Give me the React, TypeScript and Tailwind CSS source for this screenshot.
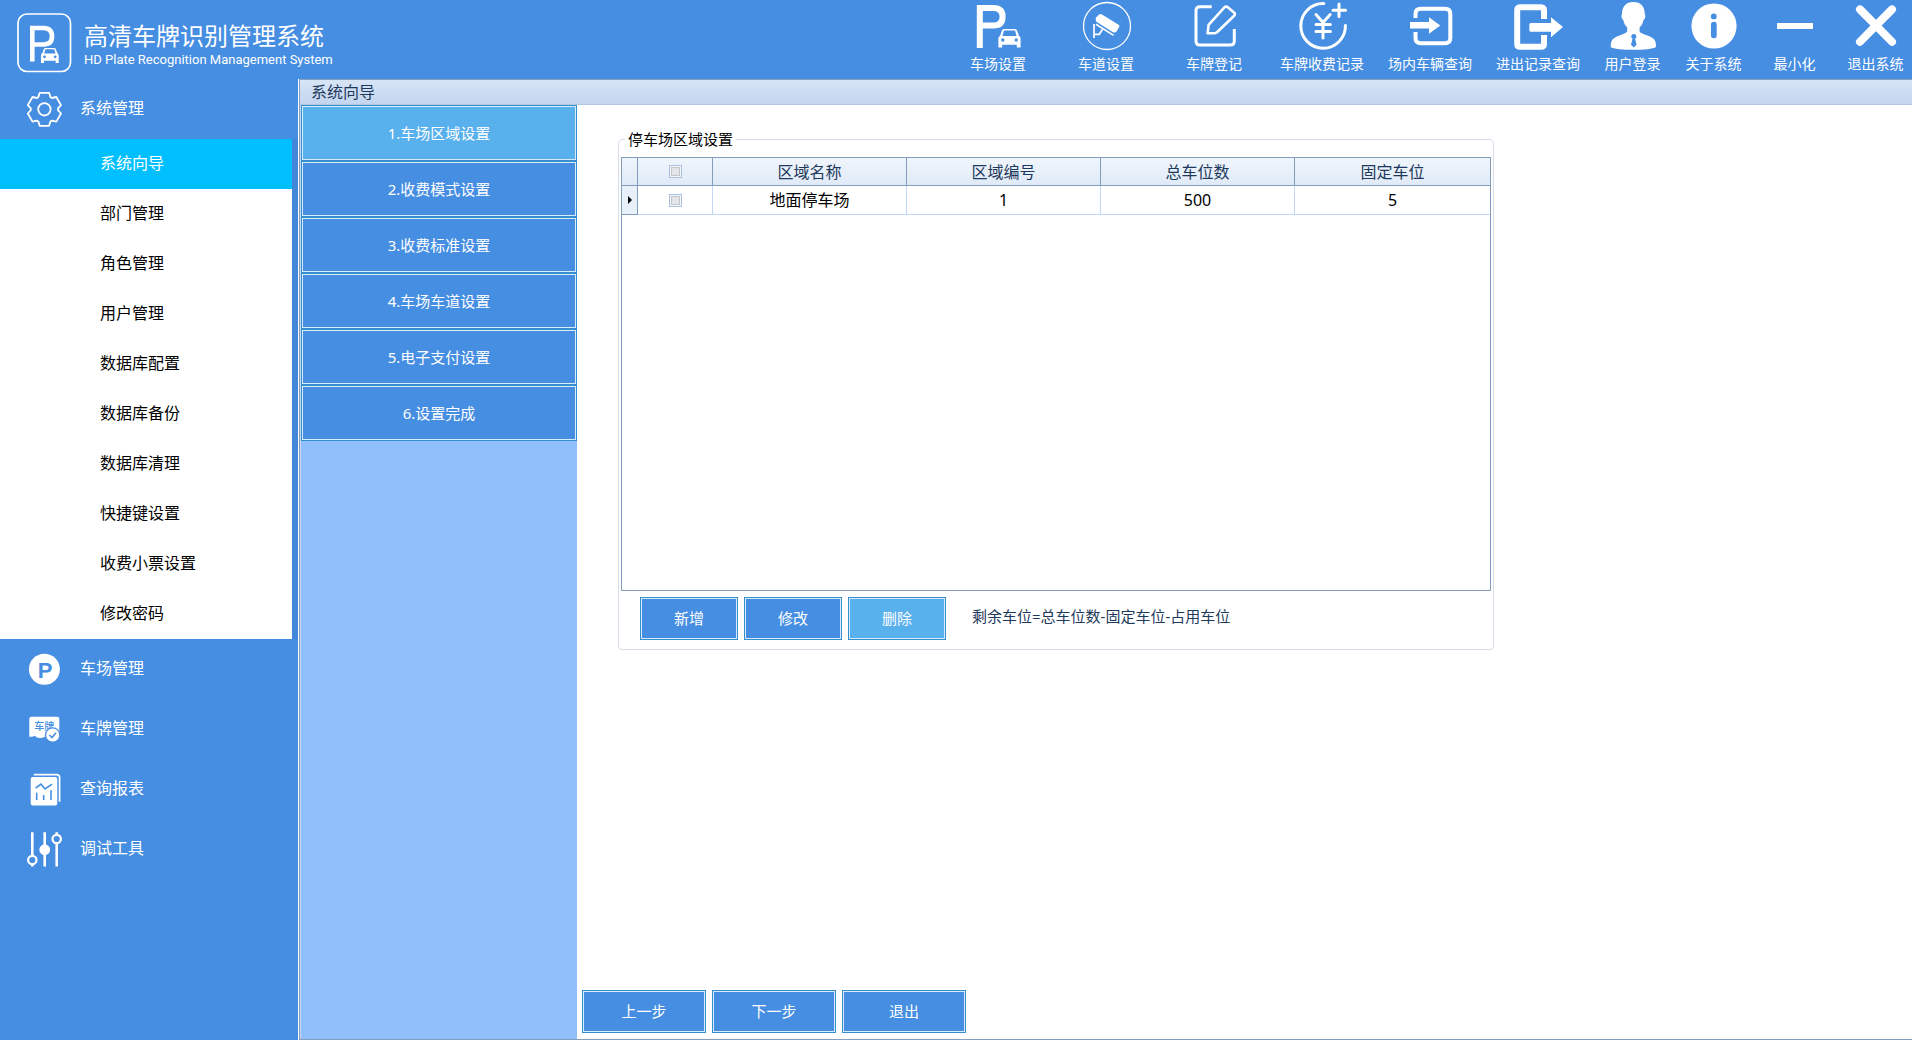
import React, { useState } from "react";

const white = "#ffffff";
const blue = "#468ee2";

/* ---------- Toolbar icons (52 x 52) ---------- */

function ToolSvg({ children }: { children: React.ReactNode }) {
  return (
    <svg width="52" height="52" viewBox="0 0 52 52" fill="none" stroke="none" aria-hidden="true">
      {children}
    </svg>
  );
}

function CarShape({ x, y, scale = 1, hole = blue }: { x: number; y: number; scale?: number; hole?: string }) {
  return (
    <g transform={`translate(${x} ${y}) scale(${scale})`}>
      <path
        fill={white}
        fillRule="evenodd"
        d="M6 0H16.6Q18.4 0 19 1.8L20.6 6.4Q22.4 7.6 22.4 9.6V18.6H18.6V15.8H4V18.6H.2V9.6Q.2 7.6 2 6.4L3.6 1.8Q4.2 0 6 0ZM5.8 1.6L4.2 7H18.4L16.8 1.6Z"
      />
      <circle cx="4.6" cy="11" r="1.7" fill={hole} />
      <circle cx="18" cy="11" r="1.7" fill={hole} />
    </g>
  );
}

function ParkingIcon() {
  return (
    <ToolSvg>
      <path d="M7.8 48V8H21.500Q30.600 8 30.600 16.700Q30.600 25.500 21.500 25.500H7.800" stroke={white} strokeWidth="6" />
      <CarShape x={26.2} y={29} />
    </ToolSvg>
  );
}

function CameraIcon() {
  return (
    <ToolSvg>
      <circle cx="27" cy="26" r="23.5" stroke={white} strokeWidth="1.3" />
      <path d="M16 17.4L19.8 14Q20.6 13.8 22 14.6L39 25Q39.8 25.6 39.4 26.6L36.6 31.6Q35 33.2 33 32.2L16.4 21.8Q15 20.6 16 17.4Z" fill={white} />
      <path d="M16 24.2L33.6 35.4" stroke={white} strokeWidth="1.7" />
      <path d="M14 24V38M14 34.3H19.2L22.6 29.2" stroke={white} strokeWidth="1.7" />
    </ToolSvg>
  );
}

function EditIcon() {
  return (
    <ToolSvg>
      <path
        d="M23.7 6.7H12Q8 6.7 8 10.7V41Q8 45 12 45H42.3Q46.3 45 46.3 41V29"
        stroke={white}
        strokeWidth="3"
      />
      <path
        d="M19.6 33.2L20.6 24.8L36.4 7.4Q38 5.8 39.8 7.2L46 12.4Q47.6 14 46.2 15.8L29 32.2Q28 33.2 26.6 33.2Z"
        stroke={white}
        strokeWidth="2.6"
        strokeLinejoin="round"
      />
    </ToolSvg>
  );
}

function FeeIcon() {
  return (
    <ToolSvg>
      <g stroke={white} strokeWidth="3" strokeLinecap="round">
        <path d="M27.8 3.6A22.3 22.3 0 1 0 49.4 25.4" />
        <path d="M43 4V16.4M37 10.2H49.6" />
        <path d="M20 14.6L27 22.4L34.2 14.6M27 22.4V38M20 24.4H34.4M20 31.4H34.4" />
      </g>
    </ToolSvg>
  );
}

function EnterIcon() {
  return (
    <ToolSvg>
      <path
        d="M11.5 18V14Q11.5 8.7 16.8 8.7H41Q46.3 8.7 46.3 14V38Q46.3 43.3 41 43.3H16.8Q11.5 43.3 11.5 38V32"
        stroke={white}
        strokeWidth="4"
      />
      <path d="M6 22H25V17.3L36.3 25.4L25 33.7V28.5H6Z" fill={white} />
    </ToolSvg>
  );
}

function LeaveIcon() {
  return (
    <ToolSvg>
      <path
        d="M32 19V10Q32 7.2 29 7.2H8Q5.2 7.2 5.2 10V44Q5.2 46.8 8 46.8H29Q32 46.8 32 44V35"
        stroke={white}
        strokeWidth="6"
      />
      <path d="M18.6 23H39V17.3L51 27L39 37.3V31.7H18.6Q17.3 31.7 17.3 30V24.6Q17.3 23 18.6 23Z" fill={white} />
    </ToolSvg>
  );
}

function UserIcon() {
  return (
    <ToolSvg>
      <path
        fill={white}
        d="M26.4 2C33.6 2 38 6.6 37.8 14.4C38.8 15 38.4 18.6 36.6 19.8C35.8 23.6 34.4 25.8 32.6 27.6V31.4C33.6 34.6 47 35.4 48.4 41.6C49 44.4 49.2 46.4 48.8 47.2C44 50.6 8.6 50.6 3.8 47.2C3.6 46 3.8 44 4.4 41.6C6 35.4 19 34.6 20.2 31.4V27.6C18.4 25.8 17 23.6 16.2 19.8C14.4 18.6 14 15 15 14.4C14.8 6.6 19.2 2 26.4 2Z"
      />
      <circle cx="26.8" cy="36.4" r="2.5" fill={blue} />
      <path d="M25.6 38.4H28L29.6 44.8L26.8 47.4L24 44.8Z" fill={blue} />
    </ToolSvg>
  );
}

function InfoIcon() {
  return (
    <ToolSvg>
      <circle cx="26" cy="26" r="22.6" fill={white} />
      <circle cx="25.8" cy="16.4" r="2.9" fill={blue} />
      <rect x="23" y="21.8" width="5.7" height="16.4" rx="2.6" fill={blue} />
    </ToolSvg>
  );
}

function MinimizeIcon() {
  return (
    <ToolSvg>
      <rect x="8" y="23" width="36" height="6" fill={white} />
    </ToolSvg>
  );
}

function CloseIcon() {
  return (
    <ToolSvg>
      <path d="M10 9.4L42 41.8M42 9.4L10 41.8" stroke={white} strokeWidth="8" strokeLinecap="round" />
    </ToolSvg>
  );
}

/* ---------- Sidebar icons (36 x 36) ---------- */

function SideSvg({ children }: { children: React.ReactNode }) {
  return (
    <svg width="36" height="36" viewBox="0 0 36 36" fill="none" aria-hidden="true">
      {children}
    </svg>
  );
}

function GearIcon() {
  return (
    <SideSvg>
      <g transform="translate(18.4 18.3)" stroke={white} strokeWidth="1.8" strokeLinejoin="round">
        <path d="M-6-12.2L-4.7-16.5H4.7L6-12.2L7.6-11.3L11.9-12.3L16.6-4.2L13.6-.9V.9L16.6 4.2L11.9 12.3L7.6 11.3L6 12.2L4.7 16.5H-4.7L-6 12.2L-7.6 11.3L-11.9 12.3L-16.6 4.2L-13.6 .9V-.9L-16.6-4.2L-11.9-12.3L-7.6-11.3Z" />
        <circle r="6.2" />
      </g>
    </SideSvg>
  );
}

function LotIcon() {
  return (
    <SideSvg>
      <circle cx="18.4" cy="18.3" r="15.5" fill={white} />
      <text x="19" y="26.5" fontSize="22" fontWeight="700" textAnchor="middle" fill={blue} fontFamily="Liberation Sans, sans-serif">
        P
      </text>
    </SideSvg>
  );
}

function PlateIcon() {
  return (
    <SideSvg>
      <path d="M5.3 5.7H31.3Q33.3 5.7 33.3 7.7V25.7H19Q16.6 27 13.4 27Q10.6 27 9.4 25.2Q7.6 24.4 6.6 25.7H3.3V7.7Q3.3 5.7 5.3 5.7Z" fill={white} />
      <text x="18.2" y="19" fontSize="10" fontWeight="500" textAnchor="middle" fill={blue} fontFamily="Noto Sans CJK SC, sans-serif">
        车牌
      </text>
      <circle cx="26.7" cy="24" r="7.2" fill={white} stroke={blue} strokeWidth="1.3" />
      <path d="M23.4 24L26 26.5L30 21.8" stroke={blue} strokeWidth="1.6" />
    </SideSvg>
  );
}

function ReportIcon() {
  return (
    <SideSvg>
      <path d="M7.8 3.6H30.6Q33.6 3.6 33.6 6.6V30.8" stroke={white} strokeWidth="1.7" />
      <rect x="4.7" y="5.9" width="26.6" height="28.7" rx="2" fill={white} />
      <path d="M9.6 17L15 13.2L19 18L26 13.2M10.7 21.7V29M17.7 24V29M25 19.3V29" stroke={blue} strokeWidth="1.6" />
    </SideSvg>
  );
}

function ToolsIcon() {
  return (
    <SideSvg>
      <g stroke={white} strokeWidth="2.6">
        <path d="M6.3 1.3V24.8M6.3 33.4V35.6M18.7 1.3V35.6M30.7 1.3V3.6M30.7 12.4V35.6" />
        <circle cx="6.3" cy="29" r="4.2" strokeWidth="2.2" />
        <circle cx="30.7" cy="8" r="4.2" strokeWidth="2.2" />
      </g>
      <circle cx="18.7" cy="18.7" r="5.4" fill={white} />
    </SideSvg>
  );
}

/* ---------- Data ---------- */

const tools = [
  { label: "车场设置", Icon: ParkingIcon },
  { label: "车道设置", Icon: CameraIcon },
  { label: "车牌登记", Icon: EditIcon },
  { label: "车牌收费记录", Icon: FeeIcon },
  { label: "场内车辆查询", Icon: EnterIcon },
  { label: "进出记录查询", Icon: LeaveIcon },
];

const windowTools = [
  { label: "用户登录", Icon: UserIcon },
  { label: "关于系统", Icon: InfoIcon },
  { label: "最小化", Icon: MinimizeIcon },
  { label: "退出系统", Icon: CloseIcon },
];

const systemMenu = [
  "系统向导",
  "部门管理",
  "角色管理",
  "用户管理",
  "数据库配置",
  "数据库备份",
  "数据库清理",
  "快捷键设置",
  "收费小票设置",
  "修改密码",
];

const otherGroups = [
  { label: "车场管理", Icon: LotIcon },
  { label: "车牌管理", Icon: PlateIcon },
  { label: "查询报表", Icon: ReportIcon },
  { label: "调试工具", Icon: ToolsIcon },
];

const steps = [
  "1.车场区域设置",
  "2.收费模式设置",
  "3.收费标准设置",
  "4.车场车道设置",
  "5.电子支付设置",
  "6.设置完成",
];

const areas = [{ name: "地面停车场", code: "1", total: "500", fixed: "5" }];

/* ---------- Parts ---------- */

function ToolButton({ label, Icon, narrow }: { label: string; Icon: () => React.ReactElement; narrow?: boolean }) {
  return (
    <button className={`flex shrink-0 flex-col items-center gap-1 text-sm leading-4 whitespace-nowrap text-white ${narrow ? "w-[81px]" : "w-[108px]"}`}>
      <Icon />
      <span>{label}</span>
    </button>
  );
}

function GroupButton({ label, Icon }: { label: string; Icon: () => React.ReactElement }) {
  return (
    <button className="flex h-[60px] w-full items-center gap-[18px] pl-[26px] text-base text-white">
      <Icon />
      <span className="pb-0.5">{label}</span>
    </button>
  );
}

function FrameButton({ label, wide, light }: { label: string; wide?: boolean; light?: boolean }) {
  return (
    <button
      className={`h-[43px] border border-[#348fcc] text-[15px] text-white shadow-[inset_0_0_0_1px_#d8ebfb] ${
        wide ? "w-[124px]" : "w-[98px]"
      } ${light ? "bg-[#58b0ed]" : "bg-[#468ee2]"}`}
    >
      {label}
    </button>
  );
}

function TickBox({ label }: { label: string }) {
  return (
    <input
      type="checkbox"
      aria-label={label}
      className="mx-auto block h-[13px] w-[13px] appearance-none border border-[#a9c1e0] bg-[#e4e5e8] shadow-[inset_0_0_0_1px_#f4f6f8,inset_0_0_0_2px_#c3c7cd]"
    />
  );
}

const headCell = "border-b border-r border-[#849dbd] p-0 font-normal";
const bodyCell = "border-b border-r border-[#c1d7f3] p-0";

export default function App() {
  const [menu, setMenu] = useState(0);
  const [step, setStep] = useState(0);

  return (
    <div className="flex min-h-screen flex-col bg-[#468ee2] font-['Noto_Sans','Noto_Sans_CJK_SC',sans-serif]">
      {/* Top bar */}
      <header className="flex h-[79px] justify-between overflow-hidden">
        <div className="flex items-center gap-3 pt-1.5 pl-4 text-white">
          <svg width="56" height="62" viewBox="0 0 56 62" fill="none" aria-hidden="true">
            <rect x="2" y="2" width="52.5" height="57.5" rx="9" stroke={white} strokeWidth="1.7" />
            <path d="M16.3 49.5V16H27.5Q36 16 36 24.3Q36 32.5 27.5 32.5H16.3" stroke={white} strokeWidth="4.6" />
            <CarShape x={24.8} y={36} scale={0.8} />
          </svg>
          <div className="pt-1.5 whitespace-nowrap">
            <h1 className="text-2xl leading-7">高清车牌识别管理系统</h1>
            <p className="font-['Roboto',sans-serif] text-[13px] leading-5">HD Plate Recognition Management System</p>
          </div>
        </div>
        <nav className="-mr-1 flex">
          {tools.map((t) => (
            <ToolButton key={t.label} label={t.label} Icon={t.Icon} />
          ))}
          {windowTools.map((t) => (
            <ToolButton key={t.label} label={t.label} Icon={t.Icon} narrow />
          ))}
        </nav>
      </header>

      <div className="flex flex-1">
        {/* Side menu */}
        <aside className="w-[298px] shrink-0">
          <GroupButton label="系统管理" Icon={GearIcon} />
          <div className="bg-[#4388d8] pr-1.5">
            <ul className="bg-white">
              {systemMenu.map((item, i) => (
                <li key={item}>
                  <button
                    onClick={() => setMenu(i)}
                    className={`block h-[50px] w-full pb-0.5 pl-[100px] text-left text-base ${
                      menu === i ? "bg-[#00bfff] text-white" : "text-black"
                    }`}
                  >
                    {item}
                  </button>
                </li>
              ))}
            </ul>
          </div>
          {otherGroups.map((g) => (
            <GroupButton key={g.label} label={g.label} Icon={g.Icon} />
          ))}
        </aside>

        {/* Wizard window */}
        <main className="flex flex-1 border-l border-white">
          <section className="flex flex-1 flex-col border-y border-l border-[#849dbd] bg-white">
            <h2 className="h-[25px] border-b border-[#b0c6e2] bg-linear-to-b from-[#d7e5f6] to-[#c3d6ef] pl-[11px] text-base leading-6 text-[#1e395b]">
              系统向导
            </h2>
            <div className="flex flex-1 border-l border-[#c4d8f2]">
              <nav className="w-[276px] shrink-0 bg-[#8fc0fc]">
                {steps.map((s, i) => (
                  <button
                    key={s}
                    onClick={() => setStep(i)}
                    className={`block h-14 w-full border border-[#348fcc] text-[15px] text-white shadow-[inset_0_0_0_1px_#d8ebfb] ${
                      step === i ? "bg-[#58b0ed]" : "bg-[#468ee2]"
                    }`}
                  >
                    {s}
                  </button>
                ))}
              </nav>

              <div className="flex flex-1 flex-col justify-between">
                <div className="px-[41px] pt-[23px]">
                  <fieldset className="w-full max-w-[876px] rounded border border-[#d5dde8] px-0.5 pb-[9px]">
                    <legend className="ml-1 px-[3px] text-[15px] leading-[22px] text-black">停车场区域设置</legend>
                    <div className="mt-[7px] h-[434px] border border-[#849dbd]">
                      <table className="w-full table-fixed border-separate border-spacing-0 text-center text-base leading-5">
                        <colgroup>
                          <col className="w-4" />
                          <col className="w-[75px]" />
                          <col className="w-[194px]" />
                          <col className="w-[194px]" />
                          <col className="w-[194px]" />
                          <col />
                        </colgroup>
                        <thead>
                          <tr className="h-7 bg-linear-to-b from-[#f0f5fc] to-[#dfeaf7] text-[#1e395b]">
                            <th className={headCell}></th>
                            <th className={headCell}>
                              <TickBox label="全选" />
                            </th>
                            <th className={headCell}>区域名称</th>
                            <th className={headCell}>区域编号</th>
                            <th className={headCell}>总车位数</th>
                            <th className="border-b border-[#849dbd] p-0 font-normal">固定车位</th>
                          </tr>
                        </thead>
                        <tbody>
                          {areas.map((a) => (
                            <tr key={a.code} className="h-[29px] text-black">
                              <td className="border-r border-b border-[#849dbd] bg-[#e8f0fa] p-0">
                                <svg width="4" height="8" viewBox="0 0 4 8" className="mx-auto block" aria-hidden="true">
                                  <path d="M0 0L4 4L0 8Z" fill="#000" />
                                </svg>
                              </td>
                              <td className={bodyCell}>
                                <TickBox label={a.name} />
                              </td>
                              <td className={bodyCell}>{a.name}</td>
                              <td className={bodyCell}>{a.code}</td>
                              <td className={bodyCell}>{a.total}</td>
                              <td className="border-b border-[#c1d7f3] p-0">{a.fixed}</td>
                            </tr>
                          ))}
                        </tbody>
                      </table>
                    </div>
                    <div className="mt-1.5 flex items-center gap-1.5 pl-[19px]">
                      <FrameButton label="新增" />
                      <FrameButton label="修改" />
                      <FrameButton label="删除" light />
                      <p className="ml-5 pb-1 text-[15px] text-[#1e395b]">剩余车位=总车位数-固定车位-占用车位</p>
                    </div>
                  </fieldset>
                </div>

                <div className="flex gap-1.5 pb-1.5 pl-[5px]">
                  <FrameButton label="上一步" wide />
                  <FrameButton label="下一步" wide />
                  <FrameButton label="退出" wide />
                </div>
              </div>
            </div>
          </section>
        </main>
      </div>
    </div>
  );
}
